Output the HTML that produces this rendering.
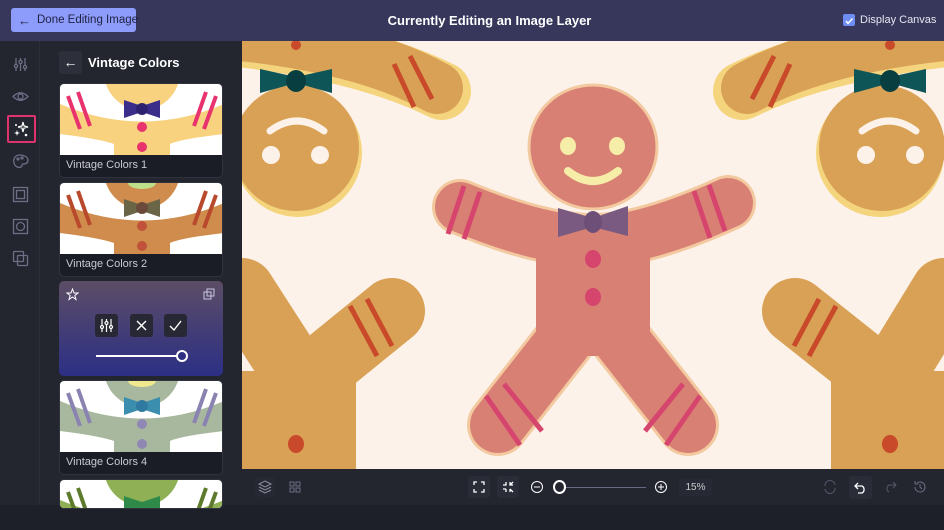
<!DOCTYPE html>
<html><head><meta charset="utf-8"><style>
*{margin:0;padding:0;box-sizing:border-box}
body{width:944px;height:530px;background:#1e2029;font-family:"Liberation Sans",sans-serif;position:relative;overflow:hidden;color:#fff}
.top{position:absolute;left:0;top:0;width:944px;height:41px;background:#36375a}
.done{position:absolute;left:11px;top:8px;width:125px;height:24px;background:#8d9cfb;border-radius:3px;color:#1e2140;font-size:11.5px;display:flex;align-items:center;padding-left:7px;gap:6px;white-space:nowrap}
.title{position:absolute;left:0;width:979px;text-align:center;top:13px;font-size:13px;font-weight:bold}
.chk{position:absolute;left:843px;top:14px;width:12px;height:12px;background:#6d8df5;border-radius:2px}
.dc{position:absolute;left:860px;top:14px;font-size:11px;color:#e6e6f0}
.rail{position:absolute;left:0;top:41px;width:40px;height:464px;background:#23252f;border-right:1px solid #2c2e3a}
.panel{position:absolute;left:40px;top:41px;width:202px;height:464px;background:#23252f}
.ico{position:absolute;left:12px;width:17px;height:17px}
.sel{position:absolute;left:7px;top:74px;width:29px;height:28px;border:2px solid #e0336e;border-radius:2px}
.back{position:absolute;left:19px;top:10px;width:23px;height:23px;background:#2d2f3b;border-radius:3px;text-align:center;line-height:22px;font-size:14px}
.ph{position:absolute;left:48px;top:14px;font-size:13px;font-weight:bold}
.card{position:absolute;left:19px;width:164px;height:95px;border-radius:5px;overflow:hidden;background:#1b1d26;border:1px solid #30323e}
.card svg{display:block}
.lab{position:absolute;left:6px;bottom:6px;font-size:11px;color:#c9c9d4}
.act{background:linear-gradient(#5c4d66,#2c2f85);border:none}
.cv{position:absolute;left:242px;top:41px;width:702px;height:428px;background:#fdf2ea}
.bar{position:absolute;left:242px;top:469px;width:702px;height:36px;background:#23252f}
.tb{position:absolute;top:8px;width:20px;height:20px;border-radius:3px}
</style></head><body>
<div class="top">
<div class="done"><span style="font-size:13px">←</span><span>Done Editing Image</span></div>
<div class="title">Currently Editing an Image Layer</div>
<div class="chk"><svg width="12" height="12"><path d="M3 6 L5 8.5 L9.5 3.5" stroke="#fff" stroke-width="1.5" fill="none"/></svg></div>
<div class="dc">Display Canvas</div>
</div>
<div class="rail">
<svg class="ico" style="top:15px" viewBox="0 0 17 17" stroke="#6c6f85" fill="none" stroke-width="1.3"><path d="M4 2v13M8.5 2v13M13 2v13"/><circle cx="4" cy="10" r="1.6" fill="#23252f"/><circle cx="8.5" cy="6" r="1.6" fill="#23252f"/><circle cx="13" cy="11" r="1.6" fill="#23252f"/></svg>
<svg class="ico" style="top:47px" viewBox="0 0 17 17" stroke="#6c6f85" fill="none" stroke-width="1.3"><path d="M1 8.5Q8.5 1 16 8.5Q8.5 16 1 8.5Z"/><circle cx="8.5" cy="8.5" r="2.5"/></svg>
<div class="sel"></div>
<svg class="ico" style="top:80px;left:13px" viewBox="0 0 17 17" fill="#fff"><path d="M10 1L11 5L15 6L11 7L10 11L9 7L5 6L9 5Z" fill="none" stroke="#fff" stroke-width="1.2"/><path d="M4 9L4.7 11.3L7 12L4.7 12.7L4 15L3.3 12.7L1 12L3.3 11.3Z"/><circle cx="13" cy="14" r="1.3"/><circle cx="3" cy="4" r="1"/></svg>
<svg class="ico" style="top:112px" viewBox="0 0 17 17" stroke="#6c6f85" fill="none" stroke-width="1.3"><path d="M8 2C3 2 1 6 2 10c1 4 5 5 7 4 2-1 0-3 2-3 3 0 5-1 5-4C16 4 12 2 8 2Z"/><circle cx="6" cy="6" r="1"/><circle cx="10" cy="5" r="1"/></svg>
<svg class="ico" style="top:145px" viewBox="0 0 17 17" stroke="#6c6f85" fill="none" stroke-width="1.3"><rect x="1.5" y="1.5" width="14" height="14"/><rect x="4.5" y="4.5" width="8" height="8"/></svg>
<svg class="ico" style="top:177px" viewBox="0 0 17 17" stroke="#6c6f85" fill="none" stroke-width="1.3"><rect x="1.5" y="1.5" width="14" height="14"/><circle cx="8.5" cy="8.5" r="4"/></svg>
<svg class="ico" style="top:209px" viewBox="0 0 17 17" stroke="#6c6f85" fill="none" stroke-width="1.3"><rect x="1.5" y="1.5" width="10" height="10" rx="1"/><rect x="5.5" y="5.5" width="10" height="10" rx="1"/></svg>
</div>
<div class="panel">
<div class="back">←</div>
<div class="ph">Vintage Colors</div>
<div class="card" style="top:42px"><svg width="164" height="71" viewBox="0 0 164 71"><rect width="164" height="71" fill="#fff"/><circle cx="82" cy="-12" r="38" fill="#f8d27e"/><path d="M0 20 Q82 55 164 20 L164 50 Q120 55 110 60 L110 71 L54 71 L54 60 Q40 55 0 50Z" fill="#f8d27e"/><path d="M8 12 L20 45 M18 8 L30 42 M156 12 L144 45 M146 8 L134 42" stroke="#e8336e" stroke-width="4"/><path d="M64 16 L82 22 L100 16 L100 34 L82 28 L64 34Z" fill="#3b2d8a"/><circle cx="82" cy="25" r="6" fill="#2d2270"/><circle cx="82" cy="43" r="5" fill="#e8336e"/><circle cx="82" cy="63" r="5" fill="#e8336e"/></svg><div class="lab">Vintage Colors 1</div></div>
<div class="card" style="top:141px"><svg width="164" height="71" viewBox="0 0 164 71"><rect width="164" height="71" fill="#fff"/><circle cx="82" cy="-12" r="38" fill="#cf8c4c"/><ellipse cx="82" cy="0" rx="14" ry="6" fill="#bfe08a"/><path d="M0 20 Q82 55 164 20 L164 50 Q120 55 110 60 L110 71 L54 71 L54 60 Q40 55 0 50Z" fill="#cf8c4c"/><path d="M8 12 L20 45 M18 8 L30 42 M156 12 L144 45 M146 8 L134 42" stroke="#b8492c" stroke-width="4"/><path d="M64 16 L82 22 L100 16 L100 34 L82 28 L64 34Z" fill="#6b6548"/><circle cx="82" cy="25" r="6" fill="#6a4a3a"/><circle cx="82" cy="43" r="5" fill="#c0513a"/><circle cx="82" cy="63" r="5" fill="#c0513a"/></svg><div class="lab">Vintage Colors 2</div></div>
<div class="card act" style="top:240px">
<svg style="position:absolute;left:7px;top:7px" width="13" height="13" viewBox="0 0 13 13"><path d="M6.5 1L8 5H12L8.8 7.5L10 11.5L6.5 9L3 11.5L4.2 7.5L1 5H5Z" fill="none" stroke="#fff" stroke-width="1"/></svg>
<svg style="position:absolute;left:144px;top:7px" width="12" height="12" viewBox="0 0 12 12" stroke="#c8c8e0" fill="none"><rect x="1" y="4" width="7" height="7"/><rect x="4" y="1" width="7" height="7"/></svg>
<div style="position:absolute;left:36px;top:33px;width:23px;height:23px;background:#272834;border-radius:3px"><svg width="23" height="23" viewBox="0 0 23 23" stroke="#fff" fill="none" stroke-width="1.2"><path d="M7 5v13M11.5 5v13M16 5v13"/><circle cx="7" cy="13" r="1.5" fill="#272834"/><circle cx="11.5" cy="9" r="1.5" fill="#272834"/><circle cx="16" cy="13" r="1.5" fill="#272834"/></svg></div>
<div style="position:absolute;left:71px;top:33px;width:23px;height:23px;background:#272834;border-radius:3px"><svg width="23" height="23" stroke="#fff" stroke-width="1.4"><path d="M7 7L16 16M16 7L7 16"/></svg></div>
<div style="position:absolute;left:105px;top:33px;width:23px;height:23px;background:#272834;border-radius:3px"><svg width="23" height="23" stroke="#fff" stroke-width="1.4" fill="none"><path d="M6 12L10 16L17 7"/></svg></div>
<div style="position:absolute;left:37px;top:74px;width:85px;height:2px;background:#fff"></div>
<div style="position:absolute;left:117px;top:69px;width:12px;height:12px;border-radius:50%;border:2px solid #fff;background:#2d2f80"></div>
</div>
<div class="card" style="top:339px"><svg width="164" height="71" viewBox="0 0 164 71"><rect width="164" height="71" fill="#fff"/><circle cx="82" cy="-12" r="38" fill="#a8b89e"/><ellipse cx="82" cy="0" rx="14" ry="6" fill="#f0e890"/><path d="M0 20 Q82 55 164 20 L164 50 Q120 55 110 60 L110 71 L54 71 L54 60 Q40 55 0 50Z" fill="#a8b89e"/><path d="M8 12 L20 45 M18 8 L30 42 M156 12 L144 45 M146 8 L134 42" stroke="#8a82b0" stroke-width="4"/><path d="M64 16 L82 22 L100 16 L100 34 L82 28 L64 34Z" fill="#3c8eae"/><circle cx="82" cy="25" r="6" fill="#2f7aa0"/><circle cx="82" cy="43" r="5" fill="#9088b4"/><circle cx="82" cy="63" r="5" fill="#9088b4"/></svg><div class="lab">Vintage Colors 4</div></div>
<div class="card" style="top:438px;height:30px"><svg width="164" height="30" viewBox="0 0 164 30"><rect width="164" height="30" fill="#fff"/><circle cx="82" cy="-12" r="38" fill="#8fb055"/><path d="M0 20 Q82 55 164 20 L164 50 L0 50Z" fill="#8fb055"/><path d="M8 12 L20 45 M18 8 L30 42 M156 12 L144 45 M146 8 L134 42" stroke="#5e7a2c" stroke-width="4"/><path d="M64 16 L82 22 L100 16 L100 34 L64 34Z" fill="#2f8a4a"/></svg></div>
</div>
<div class="cv"><svg width="702" height="428" viewBox="0 0 702 428">
<g fill="#d9a155">
<path d="M-20 -5 Q120 10 200 50" stroke="#f5d47e" stroke-width="58" fill="none" stroke-linecap="round"/>
<path d="M-20 -8 Q120 5 195 47" stroke="#d9a155" stroke-width="52" fill="none" stroke-linecap="round"/>
<circle cx="56" cy="112" r="64" fill="#f5d47e"/><circle cx="54" cy="107" r="63"/>
<path d="M152 23 L172 66 M168 15 L190 58" stroke="#c94a2a" stroke-width="5"/>
<path d="M18 28 L54 36 L90 28 L90 52 L54 42 L18 52Z" fill="#0e5558"/><ellipse cx="54" cy="40" rx="10" ry="11" fill="#083e40"/>
<circle cx="54" cy="4" r="5" fill="#c94a2a"/>
<path d="M28 90 Q55 70 82 90" stroke="#fdf2ea" stroke-width="7" fill="none" stroke-linecap="round"/>
<circle cx="29" cy="114" r="9" fill="#fdf2ea"/><circle cx="78" cy="114" r="9" fill="#fdf2ea"/>
<path d="M722 -5 Q580 10 500 50" stroke="#f5d47e" stroke-width="58" fill="none" stroke-linecap="round"/>
<path d="M722 -8 Q580 5 505 47" stroke="#d9a155" stroke-width="52" fill="none" stroke-linecap="round"/>
<circle cx="638" cy="112" r="64" fill="#f5d47e"/><circle cx="640" cy="107" r="63"/>
<path d="M548 23 L528 66 M532 15 L510 58" stroke="#c94a2a" stroke-width="5"/>
<path d="M612 28 L648 36 L684 28 L684 52 L648 42 L612 52Z" fill="#0e5558"/><ellipse cx="648" cy="40" rx="10" ry="11" fill="#083e40"/>
<circle cx="648" cy="4" r="5" fill="#c94a2a"/>
<path d="M620 90 Q647 70 674 90" stroke="#fdf2ea" stroke-width="7" fill="none" stroke-linecap="round"/>
<circle cx="624" cy="114" r="9" fill="#fdf2ea"/><circle cx="673" cy="114" r="9" fill="#fdf2ea"/>
<path d="M0 250 L60 343 L150 270" stroke="#d9a155" stroke-width="66" fill="none" stroke-linecap="round" stroke-linejoin="round"/>
<rect x="-10" y="330" width="124" height="100"/>
<path d="M108 265 L135 315 M125 258 L150 305" stroke="#c94a2a" stroke-width="5"/>
<ellipse cx="54" cy="403" rx="8" ry="9" fill="#c94a2a"/>
<path d="M702 250 L645 343 L553 270" stroke="#d9a155" stroke-width="66" fill="none" stroke-linecap="round" stroke-linejoin="round"/>
<rect x="589" y="330" width="124" height="100"/>
<path d="M594 265 L567 315 M577 258 L552 305" stroke="#c94a2a" stroke-width="5"/>
<ellipse cx="648" cy="403" rx="8" ry="9" fill="#c94a2a"/>
</g>
<g stroke="#f3c9a0" stroke-width="4" fill="#d98075">
<path d="M218 166 Q300 200 351 200 Q402 200 486 162" stroke-width="56" stroke-linecap="round" fill="none"/>
<path d="M322 300 L256 384 M380 300 L446 384" stroke-width="62" stroke-linecap="round" fill="none"/>
</g>
<g fill="#d98075">
<path d="M218 166 Q300 200 351 200 Q402 200 486 162" stroke="#d98075" stroke-width="50" stroke-linecap="round" fill="none"/>
<path d="M322 300 L256 384 M380 300 L446 384" stroke="#d98075" stroke-width="56" stroke-linecap="round" fill="none"/>
<rect x="294" y="175" width="114" height="140"/>
<ellipse cx="351" cy="106" rx="64" ry="62" stroke="#f3c9a0" stroke-width="3"/>
<ellipse cx="351" cy="106" rx="62" ry="60"/>
</g>
<g stroke="#d6456e" stroke-width="5" fill="none">
<path d="M222 145 L206 193 M238 151 L222 198 M467 144 L483 190 M452 150 L468 197"/>
<path d="M262 343 L300 390 M244 355 L278 404 M441 343 L403 390 M458 355 L424 404"/>
</g>
<ellipse cx="326" cy="105" rx="8" ry="9" fill="#f6eda8"/><ellipse cx="375" cy="105" rx="8" ry="9" fill="#f6eda8"/>
<path d="M326 130 Q351 150 376 130" stroke="#f6eda8" stroke-width="8" fill="none" stroke-linecap="round"/>
<path d="M316 167 L351 177 L386 165 L386 195 L351 186 L316 196Z" fill="#7a5a80"/><ellipse cx="351" cy="181" rx="9" ry="11" fill="#6e4f78"/>
<ellipse cx="351" cy="218" rx="8" ry="9" fill="#d6456e"/><ellipse cx="351" cy="256" rx="8" ry="9" fill="#d6456e"/>
</svg></div>
<div class="bar">
<div class="tb" style="left:13px;background:#262833"><svg width="20" height="20" stroke="#8a8da0" fill="none"><path d="M10 4L16 7L10 10L4 7Z M4 10L10 13L16 10 M4 13L10 16L16 13"/></svg></div>
<div class="tb" style="left:43px"><svg width="20" height="20" stroke="#6c6f85" fill="none"><rect x="5" y="5" width="4" height="4"/><rect x="11" y="5" width="4" height="4"/><rect x="5" y="11" width="4" height="4"/><rect x="11" y="11" width="4" height="4"/></svg></div>
<div class="tb" style="left:226px;top:7px;width:22px;height:22px;background:#2a2c38"><svg width="22" height="22" stroke="#fff" fill="none" stroke-width="1.3"><path d="M6 9V6H9 M13 6H16V9 M16 13V16H13 M9 16H6V13"/></svg></div>
<div class="tb" style="left:255px;top:7px;width:22px;height:22px;background:#2a2c38"><svg width="22" height="22" stroke="#fff" fill="none" stroke-width="1.3"><path d="M6 9H9V6 M13 9L16 6 M13 6V9H16 M9 13V16 M6 13H9 M13 13L16 16 M13 13V16"/></svg></div>
<svg style="position:absolute;left:288px;top:11px" width="14" height="14" stroke="#fff" fill="none"><circle cx="7" cy="7" r="5.5"/><path d="M4 7H10"/></svg>
<div style="position:absolute;left:316px;top:18px;width:88px;height:1px;background:#666a80"></div>
<div style="position:absolute;left:311px;top:11px;width:13px;height:14px;border:2px solid #fff;border-radius:50%;background:#23252f"></div>
<svg style="position:absolute;left:412px;top:11px" width="14" height="14" stroke="#fff" fill="none"><circle cx="7" cy="7" r="5.5"/><path d="M4 7H10M7 4V10"/></svg>
<div style="position:absolute;left:437px;top:10px;width:33px;height:17px;background:#272935;border-radius:2px;font-size:10px;line-height:17px;text-align:center;color:#ccc">15%</div>
<svg style="position:absolute;left:580px;top:10px" width="16" height="16" stroke="#555869" fill="none"><path d="M3 7A5 5 0 0 1 13 6 M13 9A5 5 0 0 1 3 10"/></svg>
<div class="tb" style="left:607px;top:7px;width:23px;height:23px;background:#2a2c38"><svg width="23" height="23" stroke="#fff" fill="none" stroke-width="1.3"><path d="M9 7L6 10L9 13 M6 10H13A4 4 0 0 1 13 17H9"/></svg></div>
<svg style="position:absolute;left:640px;top:10px" width="16" height="16" stroke="#555869" fill="none"><path d="M11 3L14 6L11 9 M14 6H7A4 4 0 0 0 7 13"/></svg>
<svg style="position:absolute;left:670px;top:10px" width="16" height="16" stroke="#6c6f85" fill="none"><path d="M3 8A5 5 0 1 0 5 4 M3 2V5H6 M8 5V8L10 10"/></svg>
</div>
</body></html>
